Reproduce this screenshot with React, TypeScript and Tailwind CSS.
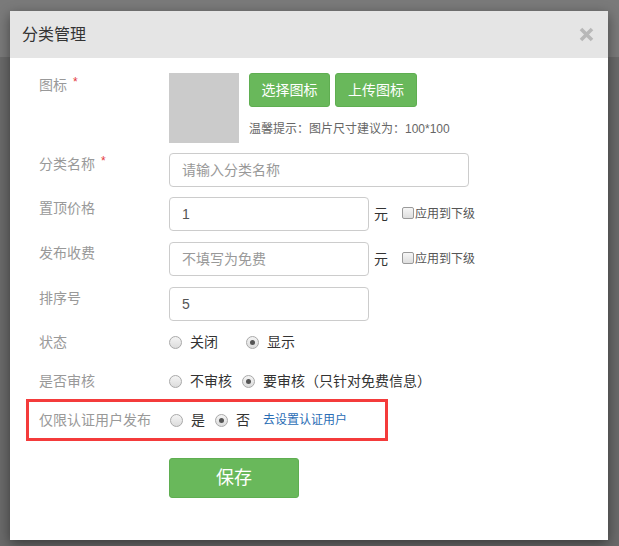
import React from "react";

const font = {
  fontFamily: '"Liberation Sans", "Noto Sans CJK SC", sans-serif',
};

function Radio({ checked }: { checked?: boolean }) {
  return (
    <span className="flex h-[13px] w-[13px] shrink-0 items-center justify-center rounded-full border border-[#a9a9a9] bg-[linear-gradient(#f4f4f4,#dcdcdc)]">
      {checked && <span className="h-[5px] w-[5px] rounded-full bg-[#555]" />}
    </span>
  );
}

function Checkbox() {
  return (
    <span className="inline-block h-[12px] w-[12px] shrink-0 rounded-[2px] border border-[#9a9a9a] bg-[linear-gradient(#f6f6f6,#dedede)]" />
  );
}

function Label({ text, required }: { text: string; required?: boolean }) {
  return (
    <div className="flex w-[130px] shrink-0 items-start pt-[1px] text-[14px] leading-[20px] text-[#999]">
      <span>{text}</span>
      {required && <span className="ml-[6px] text-[12px] leading-[14px] text-[#e4393c]">*</span>}
    </div>
  );
}

function Input({ width, value, placeholder }: { width: number; value?: string; placeholder?: string }) {
  return (
    <div
      className={
        "flex h-[34px] items-center rounded-[4px] border border-[#ccc] px-[12px] text-[14px] " +
        (width === 300 ? "w-[300px]" : "w-[200px]") +
        (value ? " text-[#555]" : " text-[#999]")
      }
    >
      {value ?? placeholder}
    </div>
  );
}

export default function App() {
  return (
    <div
      className="h-[546px] w-[619px] overflow-hidden bg-[linear-gradient(#7a7a7a_0,#7a7a7a_57px,#6a6a6a_57px)] pl-[10px] pt-[11px]"
      style={font}
    >
      <div className="flex h-[529px] w-[598px] flex-col bg-white shadow-[0_4px_12px_rgba(0,0,0,0.45)]">
        {/* header */}
        <div className="flex h-[47px] items-center justify-between bg-[#e5e5e5] pl-[12px] pr-[14px]">
          <h1 className="text-[16px] text-[#333]">分类管理</h1>
          <svg width="15" height="15" viewBox="0 0 15 15">
            <path d="M2 2 L13 13 M13 2 L2 13" stroke="#b8b8b8" strokeWidth="3.6" />
          </svg>
        </div>

        <div className="pl-[16px] pt-[15px]">
          {/* icon */}
          <div className="flex pl-[13px]">
            <div className="pt-[1px]">
              <Label text="图标" required />
            </div>
            <div className="h-[70px] w-[70px] bg-[#cbcbcb]" />
            <div className="ml-[10px] flex flex-col">
              <div className="flex gap-[5px]">
                <button className="h-[34px] w-[81px] rounded-[3px] border border-[#5fae51] bg-[#69b85b] text-[14px] text-white">
                  选择图标
                </button>
                <button className="h-[34px] w-[82px] rounded-[3px] border border-[#5fae51] bg-[#69b85b] text-[14px] text-white">
                  上传图标
                </button>
              </div>
              <div className="mt-[14px] text-[12px] leading-[16px] text-[#666]">
                温馨提示：图片尺寸建议为：100*100
              </div>
            </div>
          </div>

          {/* name */}
          <div className="mt-[10px] flex pl-[13px]">
            <Label text="分类名称" required />
            <Input width={300} placeholder="请输入分类名称" />
          </div>

          {/* top price */}
          <div className="mt-[10px] flex pl-[13px]">
            <Label text="置顶价格" />
            <Input width={200} value="1" />
            <div className="flex items-center">
              <span className="ml-[5px] text-[14px] text-[#333]">元</span>
              <span className="ml-[14px]">
                <Checkbox />
              </span>
              <span className="ml-[1px] text-[12px] text-[#555]">应用到下级</span>
            </div>
          </div>

          {/* fee */}
          <div className="mt-[11px] flex pl-[13px]">
            <Label text="发布收费" />
            <Input width={200} placeholder="不填写为免费" />
            <div className="flex items-center">
              <span className="ml-[5px] text-[14px] text-[#333]">元</span>
              <span className="ml-[14px]">
                <Checkbox />
              </span>
              <span className="ml-[1px] text-[12px] text-[#555]">应用到下级</span>
            </div>
          </div>

          {/* sort */}
          <div className="mt-[11px] flex pl-[13px]">
            <Label text="排序号" />
            <Input width={200} value="5" />
          </div>

          {/* status */}
          <div className="mt-[11px] flex h-[20px] items-center pl-[13px]">
            <div className="w-[130px] text-[14px] text-[#999]">状态</div>
            <Radio />
            <span className="ml-[8px] mr-[28px] text-[14px] text-[#333]">关闭</span>
            <Radio checked />
            <span className="ml-[8px] text-[14px] text-[#333]">显示</span>
          </div>

          {/* review */}
          <div className="mt-[19px] flex h-[20px] items-center pl-[13px]">
            <div className="w-[130px] text-[14px] text-[#999]">是否审核</div>
            <Radio />
            <span className="ml-[8px] mr-[10px] text-[14px] text-[#333]">不审核</span>
            <Radio checked />
            <span className="ml-[8px] text-[14px] text-[#333]">要审核（只针对免费信息）</span>
          </div>

          {/* verified only */}
          <div className="mt-[8px] w-[362px] border-[3px] border-[#f43b3b] py-[8px] pl-[10px]">
            <div className="flex h-[20px] items-center">
              <div className="w-[131px] text-[14px] text-[#999]">仅限认证用户发布</div>
              <Radio />
              <span className="ml-[8px] mr-[10px] text-[14px] text-[#333]">是</span>
              <Radio checked />
              <span className="ml-[8px] text-[14px] text-[#333]">否</span>
              <a className="ml-[13px] text-[12px] text-[#2a6db5]">去设置认证用户</a>
            </div>
          </div>

          {/* save */}
          <div className="mt-[17px] pl-[143px]">
            <button className="h-[40px] w-[130px] rounded-[3px] border border-[#5fae51] bg-[#69b85b] text-[18px] text-white">
              保存
            </button>
          </div>
        </div>
      </div>
    </div>
  );
}
